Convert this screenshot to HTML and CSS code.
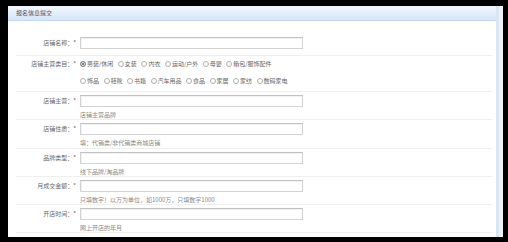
FILE: index.html
```html
<!DOCTYPE html>
<html lang="zh">
<head>
<meta charset="utf-8">
<title>报名信息提交</title>
<link rel="stylesheet" href="styles.css">
</head>
<body>
<div class="panel">
  <div class="head">报名信息提交</div>
  <form class="form">
    <div class="row first">
      <div class="label">店铺名称：*</div>
      <div class="ctrl"><input class="field" type="text"></div>
    </div>
    <div class="row cats">
      <div class="label">店铺主营类目：*</div>
      <div class="ctrl">
        <div class="opts">
          <label class="opt"><input type="radio" name="cat" checked>男装/休闲</label>
          <label class="opt"><input type="radio" name="cat">女装</label>
          <label class="opt"><input type="radio" name="cat">内衣</label>
          <label class="opt"><input type="radio" name="cat">运动/户外</label>
          <label class="opt"><input type="radio" name="cat">母婴</label>
          <label class="opt"><input type="radio" name="cat">箱包/服饰配件</label>
        </div>
        <div class="opts">
          <label class="opt"><input type="radio" name="cat">饰品</label>
          <label class="opt"><input type="radio" name="cat">鞋靴</label>
          <label class="opt"><input type="radio" name="cat">书籍</label>
          <label class="opt"><input type="radio" name="cat">汽车用品</label>
          <label class="opt"><input type="radio" name="cat">食品</label>
          <label class="opt"><input type="radio" name="cat">家居</label>
          <label class="opt"><input type="radio" name="cat">家纺</label>
          <label class="opt"><input type="radio" name="cat">数码家电</label>
        </div>
      </div>
    </div>
    <div class="row">
      <div class="label">店铺主营：*</div>
      <div class="ctrl"><input class="field" type="text"><div class="hint">店铺主营品牌</div></div>
    </div>
    <div class="row">
      <div class="label">店铺性质：*</div>
      <div class="ctrl"><input class="field" type="text"><div class="hint">填：代销类/非代销类商城店铺</div></div>
    </div>
    <div class="row">
      <div class="label">品牌类型：*</div>
      <div class="ctrl"><input class="field" type="text"><div class="hint">线下品牌/淘品牌</div></div>
    </div>
    <div class="row">
      <div class="label">月成交金额：*</div>
      <div class="ctrl"><input class="field" type="text"><div class="hint">只填数字！以万为单位，如1000万，只填数字1000</div></div>
    </div>
    <div class="row">
      <div class="label">开店时间：*</div>
      <div class="ctrl"><input class="field" type="text"><div class="hint">网上开店的年月</div></div>
    </div>
  </form>
</div>
</body>
</html>
```

FILE: styles.css
```css
html, body {
  margin: 0;
  background: #000;
}
body {
  padding: 6px 0 0 8px;
  height: 242px;
  box-sizing: border-box;
  overflow: hidden;
  font-family: "Noto Sans CJK SC", "Noto Sans", sans-serif;
  font-size: 6px;
  color: #666;
}
.panel {
  width: 491px;
  height: 231px;
  box-sizing: border-box;
  background: #fff;
  border-right: 3px solid #d8e5f3;
  box-shadow: 4px 0 0 #eef2f7;
  overflow: hidden;
}
.head {
  height: 14px;
  line-height: 14px;
  padding-left: 8px;
  color: #4a5668;
  background: linear-gradient(#f3f7fd, #d6e5f8);
  border-bottom: 1px solid #c3d6ee;
}
.form {
  margin: 0;
  padding: 10px 4px 0 8px;
}
.row {
  display: grid;
  grid-template-columns: 60px 1fr;
  column-gap: 4px;
  align-items: start;
  padding: 3px 0 0.25px;
  border-bottom: 1px solid #efefef;
}
.row.first {
  padding: 6px 0 6px;
}
.label {
  text-align: right;
  line-height: 12px;
  white-space: nowrap;
}
.ctrl {
  display: flex;
  flex-direction: column;
  align-items: flex-start;
}
.field {
  display: block;
  width: 223px;
  height: 12px;
  box-sizing: border-box;
  margin: 0;
  padding: 0;
  border: 1px solid #d2d2d2;
  border-top-color: #c0c0c0;
  box-shadow: inset 1px 1px 1px #f2f2f2;
  background: #fff;
}
.hint {
  margin-top: 4px;
  line-height: 8px;
  color: #888;
  white-space: nowrap;
}
.row.cats {
  padding: 3px 0 5px;
}
.row.cats .label {
  line-height: 10px;
}
.opts {
  display: flex;
  column-gap: 4.5px;
  line-height: 10px;
  white-space: nowrap;
}
.opts + .opts {
  margin-top: 7px;
}
.opt {
  display: flex;
  align-items: center;
}
.opt input {
  appearance: none;
  -webkit-appearance: none;
  width: 6px;
  height: 6px;
  margin: 0 1px 0 0;
  border: 1px solid #b0b0b0;
  border-radius: 50%;
  background: #fff;
  box-sizing: border-box;
}
.opt input:checked {
  background: #555;
  box-shadow: inset 0 0 0 1px #fff;
  border-color: #888;
}
```
